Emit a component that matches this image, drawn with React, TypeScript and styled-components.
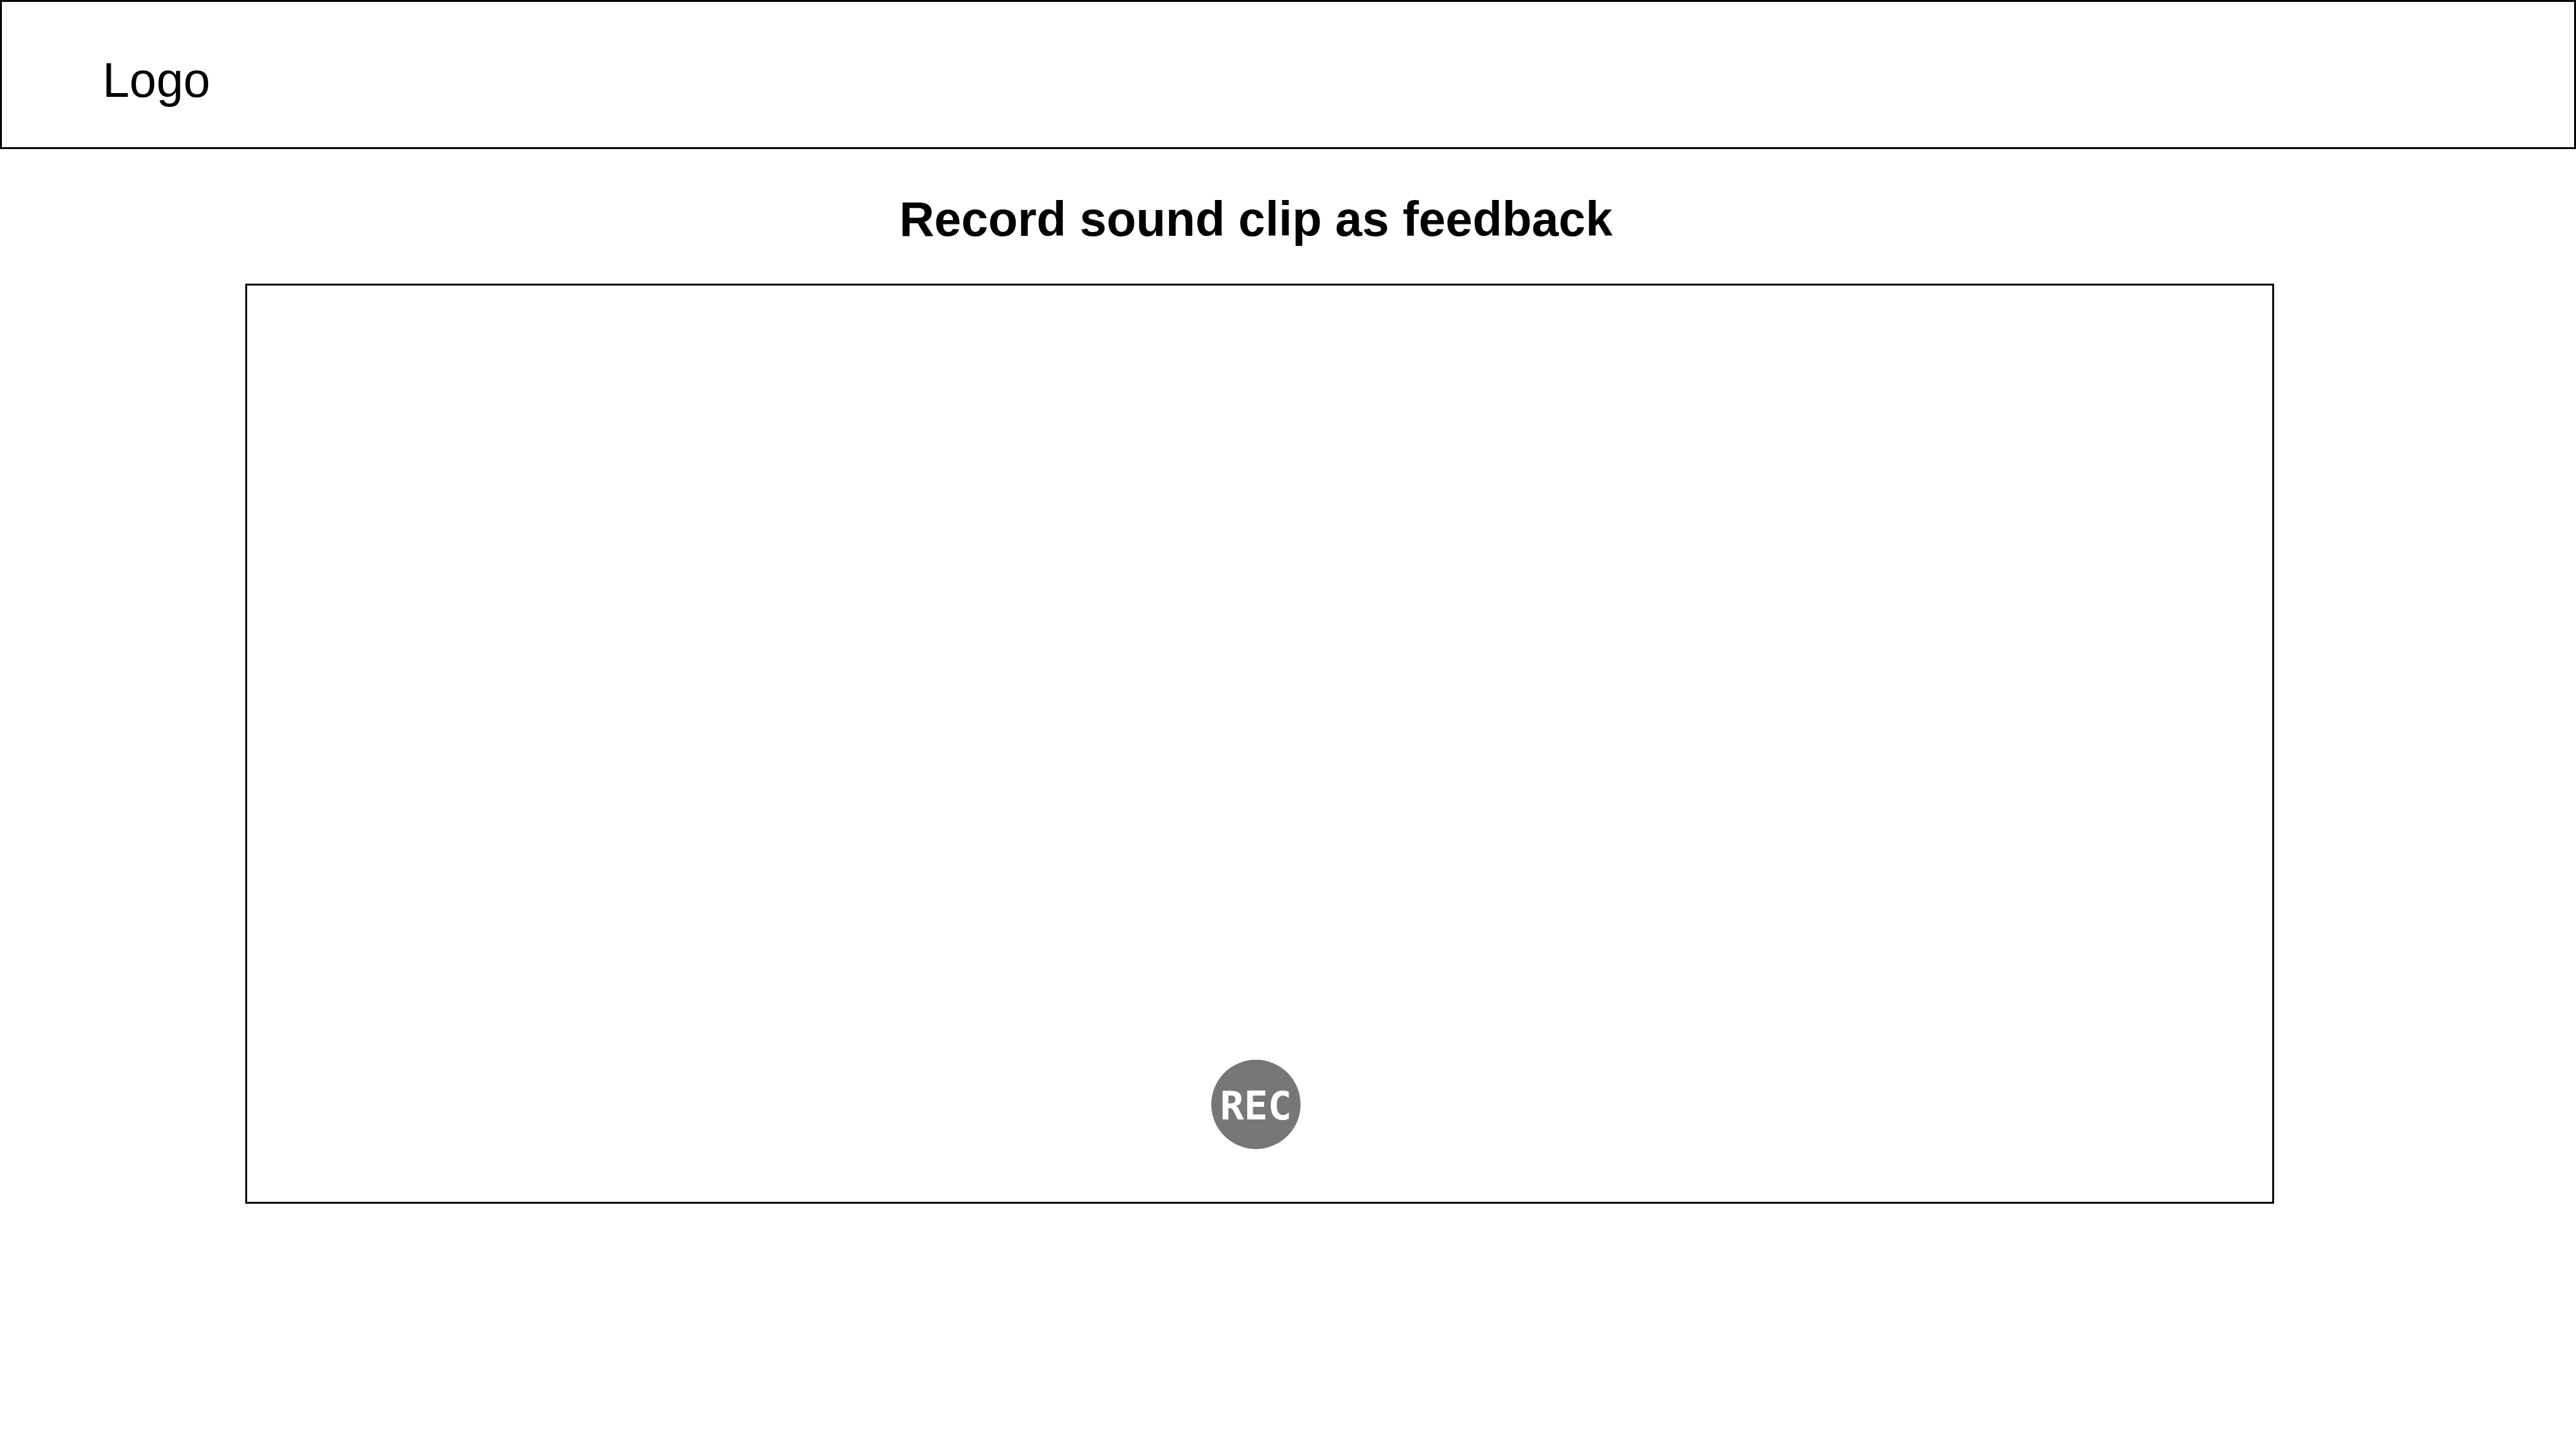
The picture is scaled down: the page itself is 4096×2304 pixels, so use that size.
import React, { useState } from "react";
import styled, { createGlobalStyle } from "styled-components";

const GlobalStyle = createGlobalStyle`
  *, *::before, *::after {
    box-sizing: border-box;
  }
  body {
    margin: 0;
    background: #fff;
    color: #000;
    font-family: "Liberation Sans", Arial, Helvetica, sans-serif;
  }
`;

const Page = styled.div`
  display: flex;
  flex-direction: column;
  min-height: 100vh;
`;

const Header = styled.header`
  display: flex;
  align-items: center;
  height: 237px;
  padding: 16px 160px 0;
  border: 3px solid #000;
`;

const Logo = styled.a`
  color: inherit;
  font-size: 77px;
  line-height: 88px;
  text-decoration: none;
`;

const Main = styled.main`
  flex: 1;
  display: flex;
  flex-direction: column;
  padding: 67px 480px 390px 390px;
`;

const Title = styled.h1`
  margin: 0 0 59px;
  padding-right: 12px;
  font-size: 77px;
  font-weight: 700;
  line-height: 88px;
  text-align: center;
`;

const Recorder = styled.section`
  flex: 1;
  display: flex;
  align-items: flex-end;
  justify-content: center;
  padding: 0 12px 84px 0;
  border: 3px solid #000;
`;

const RecordButton = styled.button`
  display: flex;
  align-items: center;
  justify-content: center;
  width: 142px;
  height: 142px;
  padding: 4px 0 0;
  border: 0;
  border-radius: 50%;
  background: #777;
  color: #fff;
  font-family: "DejaVu Sans Mono", monospace;
  font-size: 63px;
  font-weight: 700;
  line-height: 1;
  cursor: pointer;
`;

export default function App() {
  const [recording, setRecording] = useState(false);

  return (
    <>
      <GlobalStyle />
      <Page>
        <Header>
          <Logo href="#">Logo</Logo>
        </Header>
        <Main>
          <Title id="recorder-title">Record sound clip as feedback</Title>
          <Recorder aria-labelledby="recorder-title">
            <RecordButton
              type="button"
              aria-pressed={recording}
              onClick={() => setRecording(!recording)}
            >
              REC
            </RecordButton>
          </Recorder>
        </Main>
      </Page>
    </>
  );
}
